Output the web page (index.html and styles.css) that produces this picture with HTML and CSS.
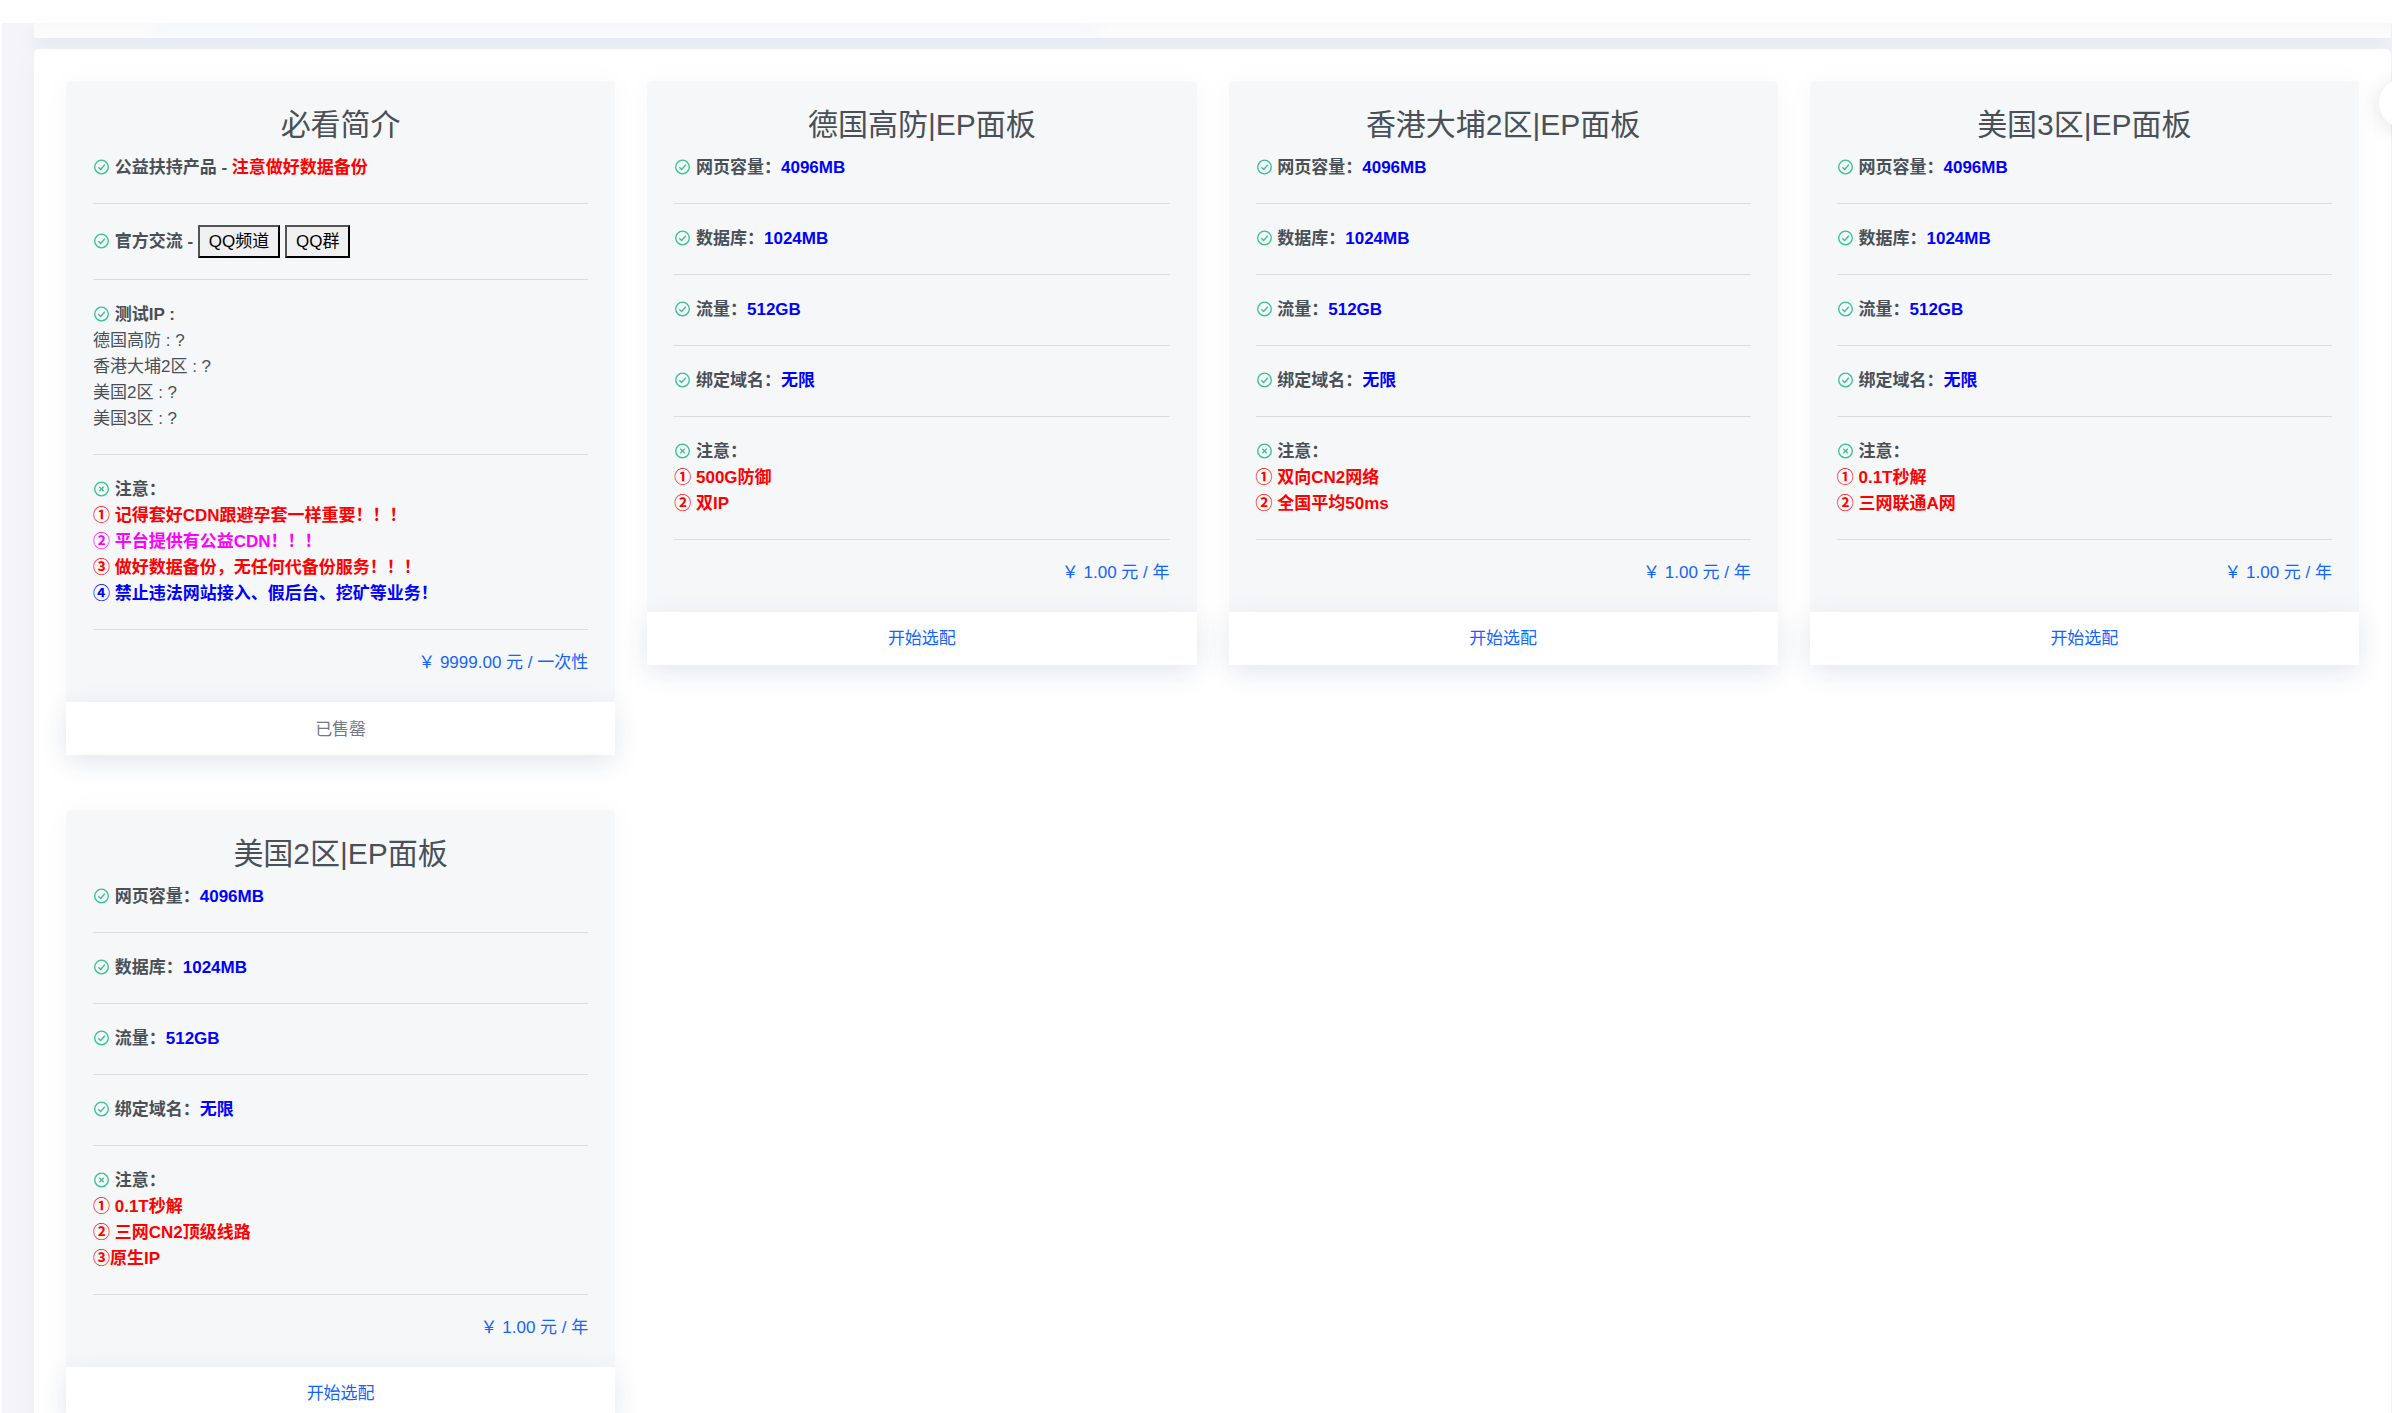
FILE: index.html
```html
<!DOCTYPE html>
<html lang="zh-CN">
<head>
<meta charset="utf-8">
<title>产品选配</title>
<link rel="stylesheet" href="styles.css">
</head>
<body>
<svg class="defs" aria-hidden="true">
  <symbol id="ok" viewBox="0 0 16 16"><circle cx="8" cy="8" r="6.8"/><path d="M4.8 8.2l2.3 2.3 4.2-4.8"/></symbol>
  <symbol id="no" viewBox="0 0 16 16"><circle cx="8" cy="8" r="6.8"/><path d="M5.8 5.8l4.4 4.4M10.2 5.8l-4.4 4.4"/></symbol>
</svg>
<header class="topbar"></header>
<div class="shell">
  <main class="content">
    <div class="filter"><div class="filter-inner"></div></div>
    <section class="panel">
      <article class="card">
        <div class="body">
          <h2>必看简介</h2>
          <p><svg class="icon"><use href="#ok"/></svg> <b>公益扶持产品 - <span class="red">注意做好数据备份</span></b></p>
          <hr>
          <p><svg class="icon"><use href="#ok"/></svg> <b>官方交流 - </b><button class="chip" type="button">QQ频道</button> <button class="chip" type="button">QQ群</button></p>
          <hr>
          <p><svg class="icon"><use href="#ok"/></svg> <b>测试IP :</b><br>德国高防 : ?<br>香港大埔2区 : ?<br>美国2区 : ?<br>美国3区 : ?</p>
          <hr>
          <p><svg class="icon"><use href="#no"/></svg> <b>注意：<br><span class="red">① 记得套好CDN跟避孕套一样重要！！！</span><br><span class="pink">② 平台提供有公益CDN！！！</span><br><span class="red">③ 做好数据备份，无任何代备份服务！！！</span><br><span class="blue">④ 禁止违法网站接入、假后台、挖矿等业务！</span></b></p>
          <hr>
          <p class="price">￥ 9999.00 元 / 一次性</p>
        </div>
        <button class="action" type="button" disabled>已售罄</button>
      </article>

      <article class="card">
        <div class="body">
          <h2>德国高防|EP面板</h2>
          <p><svg class="icon"><use href="#ok"/></svg> <b>网页容量：<span class="blue">4096MB</span></b></p>
          <hr>
          <p><svg class="icon"><use href="#ok"/></svg> <b>数据库：<span class="blue">1024MB</span></b></p>
          <hr>
          <p><svg class="icon"><use href="#ok"/></svg> <b>流量：<span class="blue">512GB</span></b></p>
          <hr>
          <p><svg class="icon"><use href="#ok"/></svg> <b>绑定域名：<span class="blue">无限</span></b></p>
          <hr>
          <p><svg class="icon"><use href="#no"/></svg> <b>注意：<br><span class="red">① 500G防御<br>② 双IP</span></b></p>
          <hr>
          <p class="price">￥ 1.00 元 / 年</p>
        </div>
        <a class="action" href="#">开始选配</a>
      </article>

      <article class="card">
        <div class="body">
          <h2>香港大埔2区|EP面板</h2>
          <p><svg class="icon"><use href="#ok"/></svg> <b>网页容量：<span class="blue">4096MB</span></b></p>
          <hr>
          <p><svg class="icon"><use href="#ok"/></svg> <b>数据库：<span class="blue">1024MB</span></b></p>
          <hr>
          <p><svg class="icon"><use href="#ok"/></svg> <b>流量：<span class="blue">512GB</span></b></p>
          <hr>
          <p><svg class="icon"><use href="#ok"/></svg> <b>绑定域名：<span class="blue">无限</span></b></p>
          <hr>
          <p><svg class="icon"><use href="#no"/></svg> <b>注意：<br><span class="red">① 双向CN2网络<br>② 全国平均50ms</span></b></p>
          <hr>
          <p class="price">￥ 1.00 元 / 年</p>
        </div>
        <a class="action" href="#">开始选配</a>
      </article>

      <article class="card">
        <div class="body">
          <h2>美国3区|EP面板</h2>
          <p><svg class="icon"><use href="#ok"/></svg> <b>网页容量：<span class="blue">4096MB</span></b></p>
          <hr>
          <p><svg class="icon"><use href="#ok"/></svg> <b>数据库：<span class="blue">1024MB</span></b></p>
          <hr>
          <p><svg class="icon"><use href="#ok"/></svg> <b>流量：<span class="blue">512GB</span></b></p>
          <hr>
          <p><svg class="icon"><use href="#ok"/></svg> <b>绑定域名：<span class="blue">无限</span></b></p>
          <hr>
          <p><svg class="icon"><use href="#no"/></svg> <b>注意：<br><span class="red">① 0.1T秒解<br>② 三网联通A网</span></b></p>
          <hr>
          <p class="price">￥ 1.00 元 / 年</p>
        </div>
        <a class="action" href="#">开始选配</a>
      </article>

      <article class="card">
        <div class="body">
          <h2>美国2区|EP面板</h2>
          <p><svg class="icon"><use href="#ok"/></svg> <b>网页容量：<span class="blue">4096MB</span></b></p>
          <hr>
          <p><svg class="icon"><use href="#ok"/></svg> <b>数据库：<span class="blue">1024MB</span></b></p>
          <hr>
          <p><svg class="icon"><use href="#ok"/></svg> <b>流量：<span class="blue">512GB</span></b></p>
          <hr>
          <p><svg class="icon"><use href="#ok"/></svg> <b>绑定域名：<span class="blue">无限</span></b></p>
          <hr>
          <p><svg class="icon"><use href="#no"/></svg> <b>注意：<br><span class="red">① 0.1T秒解<br>② 三网CN2顶级线路<br>③原生IP</span></b></p>
          <hr>
          <p class="price">￥ 1.00 元 / 年</p>
        </div>
        <a class="action" href="#">开始选配</a>
      </article>
    </section>
  </main>
</div>
<button class="float" type="button" aria-label="设置"></button>
</body>
</html>
```
FILE: styles.css
```css
* { box-sizing: border-box; }

body {
  margin: 0;
  height: 100vh;
  overflow: hidden;
  background: #fff;
  color: #495057;
  font: 17px/26px "Liberation Sans", "Noto Sans CJK SC", sans-serif;
}

.defs { display: none; }

.topbar { height: 23px; background: #fff; }

.shell {
  margin-left: 2px;
  padding: 0 1px 0 32px;
  background: #f4f4f9;
}

.filter {
  height: 15px;
  overflow: hidden;
  background: linear-gradient(#f9f9fa, #fcfcfc);
  box-shadow: 0 8px 20px rgba(18, 60, 150, .08);
}

.filter-inner {
  width: 40%;
  height: 15px;
  margin-left: 5%;
  background: linear-gradient(#f2f4fa, #fafafc);
  filter: blur(6px);
}

.panel {
  display: grid;
  grid-template-columns: repeat(4, minmax(0, 1fr));
  align-items: start;
  gap: 55px 32px;
  margin-top: 11px;
  padding: 32px;
  border-radius: 5px;
  background: #fff;
  box-shadow: 0 8px 30px rgba(18, 38, 63, .03);
  position: relative;
}

.card {
  border-radius: 5px;
  background: #f6f7f9;
  box-shadow: 0 0 30px rgba(18, 38, 63, .03);
}

.body { padding: 27px 27px 28px; }

h2 {
  margin: 0 0 13px;
  font-size: 30px;
  line-height: 34px;
  font-weight: 400;
  text-align: center;
}

p { margin: 0; }

hr {
  height: 1px;
  margin: 22px 0;
  border: 0;
  background: #dadde0;
}

.icon {
  width: 17px;
  height: 16px;
  vertical-align: -2px;
  fill: none;
  stroke: #34c38f;
  stroke-width: 1.3;
}

.red { color: #f00; }
.pink { color: #f0f; }
.blue { color: #00f; }

.chip {
  height: 33px;
  margin: -1px 0;
  padding: 0 9px;
  border: 2px outset #000;
  background: #f0f0f0;
  color: #000;
  font: inherit;
}

.price {
  color: #1464ff;
  line-height: 22px;
  text-align: right;
}

.action {
  display: block;
  width: 100%;
  height: 53px;
  border: 0;
  background: #fff;
  box-shadow: 0 8px 28px rgba(18, 60, 130, .1);
  color: #1464ff;
  font: inherit;
  line-height: 53px;
  text-align: center;
  text-decoration: none;
}

.action:disabled { color: #74788d; }

.float {
  position: fixed;
  top: 78px;
  right: -37px;
  width: 50px;
  height: 50px;
  border: 0;
  border-radius: 50%;
  background: #fff;
  box-shadow: 0 3px 20px rgba(0, 0, 0, .12);
}
```
